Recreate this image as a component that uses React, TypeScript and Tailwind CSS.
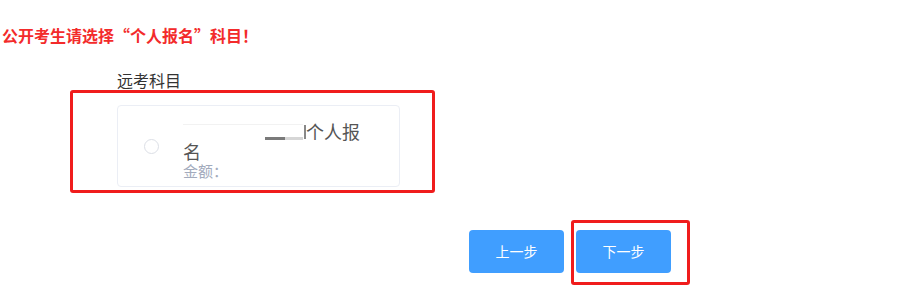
import React from 'react';

const cjk = { fontFamily: '"Noto Sans CJK SC", "Liberation Sans", sans-serif' };

const SubjectCard: React.FC = () => (
  <div className="w-[283px] h-[82px] border border-[#ebeef5] rounded-[4px] bg-white flex items-start pl-[26px] pt-[15px]">
    <span className="mt-[18px] w-[15px] h-[15px] rounded-full border border-[#dcdfe6] bg-white shrink-0" />
    <div className="ml-[24px] flex flex-col">
      <div className="flex items-end h-[20px] text-[18px] leading-[20px] text-[#555]">
        {/* masked part of the subject name */}
        <span className="w-[120px] h-[16px] mb-[1px] bg-white border-t border-[#f2f2f2] flex items-end">
          <span className="w-[82px]" />
          <span className="w-[20px] h-[3px] bg-[#7a7a7a]" />
          <span className="w-[18px] h-[3px] bg-[#d6d6d6]" />
        </span>
        <span className="w-[3px] h-[14px] mb-[2px] border-r-2 border-[#888]" />
        <span>个人报</span>
      </div>
      <div className="text-[18px] leading-[20px] text-[#555]">名</div>
      <div className="text-[15px] leading-[20px] text-[#a3abbd]">金额：</div>
    </div>
  </div>
);

export default function App() {
  return (
    <div className="w-[900px] h-[300px] bg-white overflow-hidden" style={cjk}>
      <div className="pt-[26px] pl-[2px] text-[16px] leading-[18px] font-bold text-[#f32b2b]">
        公开考生请选择“个人报名”科目！
      </div>
      <div className="mt-[27px] pl-[117px] text-[16px] leading-[18px] text-[#333]">远考科目</div>
      <div className="ml-[70px] mt-[1px] w-[365px] h-[103px] border-[3px] border-[#f01c1c] rounded-[3px] pl-[44px] pt-[12px]">
        <SubjectCard />
      </div>
      <div className="mt-[27px] ml-[469px] flex items-start">
        <button className="mt-[10px] w-[95px] h-[43px] rounded-[4px] bg-[#409eff] text-white text-[14px]">
          上一步
        </button>
        <div className="ml-[7px] border-[3px] border-[#f01c1c] rounded-[3px] pl-[2px] pr-[16px] pt-[7px] pb-[9px]">
          <button className="w-[95px] h-[43px] rounded-[4px] bg-[#409eff] text-white text-[14px]">
            下一步
          </button>
        </div>
      </div>
    </div>
  );
}
